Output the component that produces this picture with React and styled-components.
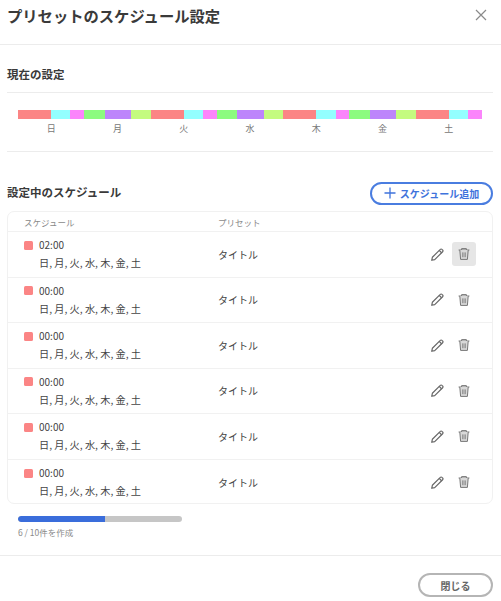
import React from "react";
import styled, { createGlobalStyle } from "styled-components";

const GlobalStyle = createGlobalStyle`
  html, body {
    margin: 0;
    padding: 0;
    background: #fff;
    font-family: "Noto Sans CJK JP", "Noto Sans", sans-serif;
    color: #333;
  }
`;

const Dialog = styled.div`
  width: 501px;
  height: 601px;
  overflow: hidden;
`;

const Header = styled.header`
  height: 45px;
  box-sizing: border-box;
  border-bottom: 1px solid #ececec;
  padding: 3px 14px 0 7px;
  display: flex;
  justify-content: space-between;
  align-items: flex-start;
`;

const Title = styled.h1`
  margin: 0;
  font-size: 15.3px;
  line-height: 24px;
  font-weight: 700;
  color: #3a3a3a;
`;

const CloseIcon = styled.svg`
  width: 12px;
  height: 12px;
  margin-top: 6px;
  stroke: #8a8a8a;
  stroke-width: 1.2;
  fill: none;
`;

const Section = styled.section`
  padding: 0 8px 0 7px;
`;

const CurrentHeading = styled.h2`
  margin: 0;
  height: 48px;
  box-sizing: border-box;
  padding-top: 20px;
  border-bottom: 1px solid #ececec;
  font-size: 11.5px;
  line-height: 18px;
  font-weight: 700;
  color: #3a3a3a;
`;

const Timeline = styled.div`
  padding: 17px 11px 0;
  height: 41px;
  border-bottom: 1px solid #ececec;
`;

const Bar = styled.div`
  display: flex;
  height: 9px;
`;

const Segment = styled.div`
  flex: ${(p) => p.$hours} 0 0;
  background: ${(p) => p.$color};
`;

const DayLabels = styled.div`
  display: grid;
  grid-template-columns: repeat(7, 1fr);
  margin-top: 3px;
`;

const DayLabel = styled.span`
  text-align: center;
  font-size: 9px;
  line-height: 14px;
  color: #777;
`;

const ScheduleHeader = styled.div`
  display: flex;
  justify-content: space-between;
  align-items: center;
  padding-top: 29px;
  height: 24px;
  margin-bottom: 6px;
`;

const ScheduleHeading = styled.h2`
  margin: -2px 0 0;
  font-size: 11.5px;
  line-height: 24px;
  font-weight: 700;
  color: #3a3a3a;
`;

const AddButton = styled.button`
  width: 123px;
  height: 23px;
  box-sizing: border-box;
  padding: 0;
  border: 2px solid #4a7de0;
  border-radius: 12px;
  background: #fff;
  color: #3f73dc;
  font-family: inherit;
  font-size: 10px;
  font-weight: 700;
  display: flex;
  align-items: center;
  justify-content: center;
  gap: 4px;
`;

const PlusIcon = styled.svg`
  width: 12px;
  height: 12px;
  stroke: #3f73dc;
  stroke-width: 1.3;
  fill: none;
`;

const Table = styled.div`
  border: 1px solid #f1f1f1;
  border-radius: 7px;
  height: 293px;
  box-sizing: border-box;
`;

const TableHead = styled.div`
  display: grid;
  grid-template-columns: 194px 1fr;
  height: 20px;
  align-items: center;
  padding-left: 16px;
  font-size: 8.5px;
  color: #8a8a8a;
  border-bottom: 1px solid #f1f1f1;
  box-sizing: border-box;
`;

const Row = styled.div`
  display: grid;
  grid-template-columns: 194px 1fr auto;
  height: 45.5px;
  box-sizing: border-box;
  padding: 0 16px 0 16px;
  align-items: center;
  border-bottom: 1px solid #f1f1f1;
  &:last-child {
    border-bottom: none;
  }
`;

const ScheduleCell = styled.div`
  display: flex;
  flex-direction: column;
`;

const TimeLine = styled.div`
  display: flex;
  align-items: center;
  gap: 6px;
  font-size: 10px;
  line-height: 18px;
  color: #444;
`;

const ColorDot = styled.span`
  width: 9px;
  height: 9px;
  border-radius: 1.5px;
  background: #fb8585;
`;

const Days = styled.div`
  margin-left: 15px;
  font-size: 10.2px;
  line-height: 18px;
  color: #444;
  white-space: nowrap;
`;

const PresetCell = styled.div`
  font-size: 10px;
  color: #444;
`;

const Actions = styled.div`
  display: flex;
  align-items: center;
  gap: 3px;
`;

const IconButton = styled.button`
  width: 24px;
  height: 24px;
  padding: 0;
  border: none;
  border-radius: 3px;
  background: ${(p) => (p.$active ? "#e6e6e6" : "transparent")};
  display: flex;
  align-items: center;
  justify-content: center;
`;

const Progress = styled.div`
  margin: 12px 0 0 11px;
  width: 164px;
  height: 6px;
  border-radius: 3px;
  background: #c6c6c6;
  overflow: hidden;
`;

const ProgressFill = styled.div`
  height: 100%;
  background: #3a6ddb;
  border-radius: 3px 0 0 3px;
`;

const ProgressText = styled.div`
  margin: 3px 0 0 11px;
  font-size: 8.5px;
  line-height: 14px;
  color: #8a8a8a;
`;

const Footer = styled.footer`
  margin-top: 16px;
  border-top: 1px solid #ececec;
  padding: 17px 8px 0 0;
  display: flex;
  justify-content: flex-end;
`;

const CloseButton = styled.button`
  width: 75px;
  height: 24px;
  box-sizing: border-box;
  padding: 0;
  border: 2px solid #b5b5b5;
  border-radius: 12px;
  background: #fff;
  color: #666;
  font-family: inherit;
  font-size: 10px;
  font-weight: 700;
`;

const PencilIcon = () => (
  <svg width="15" height="15" viewBox="0 0 14 14" fill="none" stroke="#666" strokeWidth="1.1" strokeLinejoin="round">
    <path d="M2.2 9.6 9.6 2.2a1.1 1.1 0 0 1 1.6 0l.6.6a1.1 1.1 0 0 1 0 1.6L4.4 11.8 1.6 12.4z" />
    <path d="M8.6 3.2 10.8 5.4" />
  </svg>
);

const TrashIcon = () => (
  <svg width="14" height="14" viewBox="0 0 14 14" fill="none" stroke="#777" strokeWidth="1">
    <path d="M1.6 3h10.8" />
    <path d="M4.6 3V1.6h4.8V3" />
    <path d="M2.8 3l.8 9.4h6.8l.8-9.4" fill="#d8d8d8" />
    <path d="M5.6 5.4v4.8M7 5.4v4.8M8.4 5.4v4.8" strokeWidth="0.7" />
  </svg>
);

// 2日分の色パターンを繰り返す
const SEGMENTS = [
  [12, "#fb8585"],
  [7, "#93ffff"],
  [5, "#fb85fb"],
  [7.4, "#8cfb7f"],
  [9.6, "#bd85fb"],
  [7, "#c4fb7f"],
];
const DAYS = ["日", "月", "火", "水", "木", "金", "土"];
const WEEK = [...SEGMENTS, ...SEGMENTS, ...SEGMENTS, ...SEGMENTS.slice(0, 3)];
const ROWS = [
  { time: "02:00", active: true },
  { time: "00:00" },
  { time: "00:00" },
  { time: "00:00" },
  { time: "00:00" },
  { time: "00:00" },
];

export default function App() {
  return (
    <Dialog>
      <GlobalStyle />
      <Header>
        <Title>プリセットのスケジュール設定</Title>
        <CloseIcon viewBox="0 0 12 12">
          <path d="M1 1l10 10M11 1L1 11" />
        </CloseIcon>
      </Header>
      <Section>
        <CurrentHeading>現在の設定</CurrentHeading>
        <Timeline>
          <Bar>
            {WEEK.map(([hours, color], i) => (
              <Segment key={i} $hours={hours} $color={color} />
            ))}
          </Bar>
          <DayLabels>
            {DAYS.map((d) => (
              <DayLabel key={d}>{d}</DayLabel>
            ))}
          </DayLabels>
        </Timeline>
        <ScheduleHeader>
          <ScheduleHeading>設定中のスケジュール</ScheduleHeading>
          <AddButton>
            <PlusIcon viewBox="0 0 12 12">
              <path d="M6 .5v11M.5 6h11" />
            </PlusIcon>
            スケジュール追加
          </AddButton>
        </ScheduleHeader>
        <Table>
          <TableHead>
            <span>スケジュール</span>
            <span>プリセット</span>
          </TableHead>
          {ROWS.map((row, i) => (
            <Row key={i}>
              <ScheduleCell>
                <TimeLine>
                  <ColorDot />
                  {row.time}
                </TimeLine>
                <Days>日, 月, 火, 水, 木, 金, 土</Days>
              </ScheduleCell>
              <PresetCell>タイトル</PresetCell>
              <Actions>
                <IconButton>
                  <PencilIcon />
                </IconButton>
                <IconButton $active={row.active}>
                  <TrashIcon />
                </IconButton>
              </Actions>
            </Row>
          ))}
        </Table>
        <Progress>
          <ProgressFill style={{ width: `${(6 / 11.3) * 100}%` }} />
        </Progress>
        <ProgressText>6 / 10件を作成</ProgressText>
      </Section>
      <Footer>
        <CloseButton>閉じる</CloseButton>
      </Footer>
    </Dialog>
  );
}
